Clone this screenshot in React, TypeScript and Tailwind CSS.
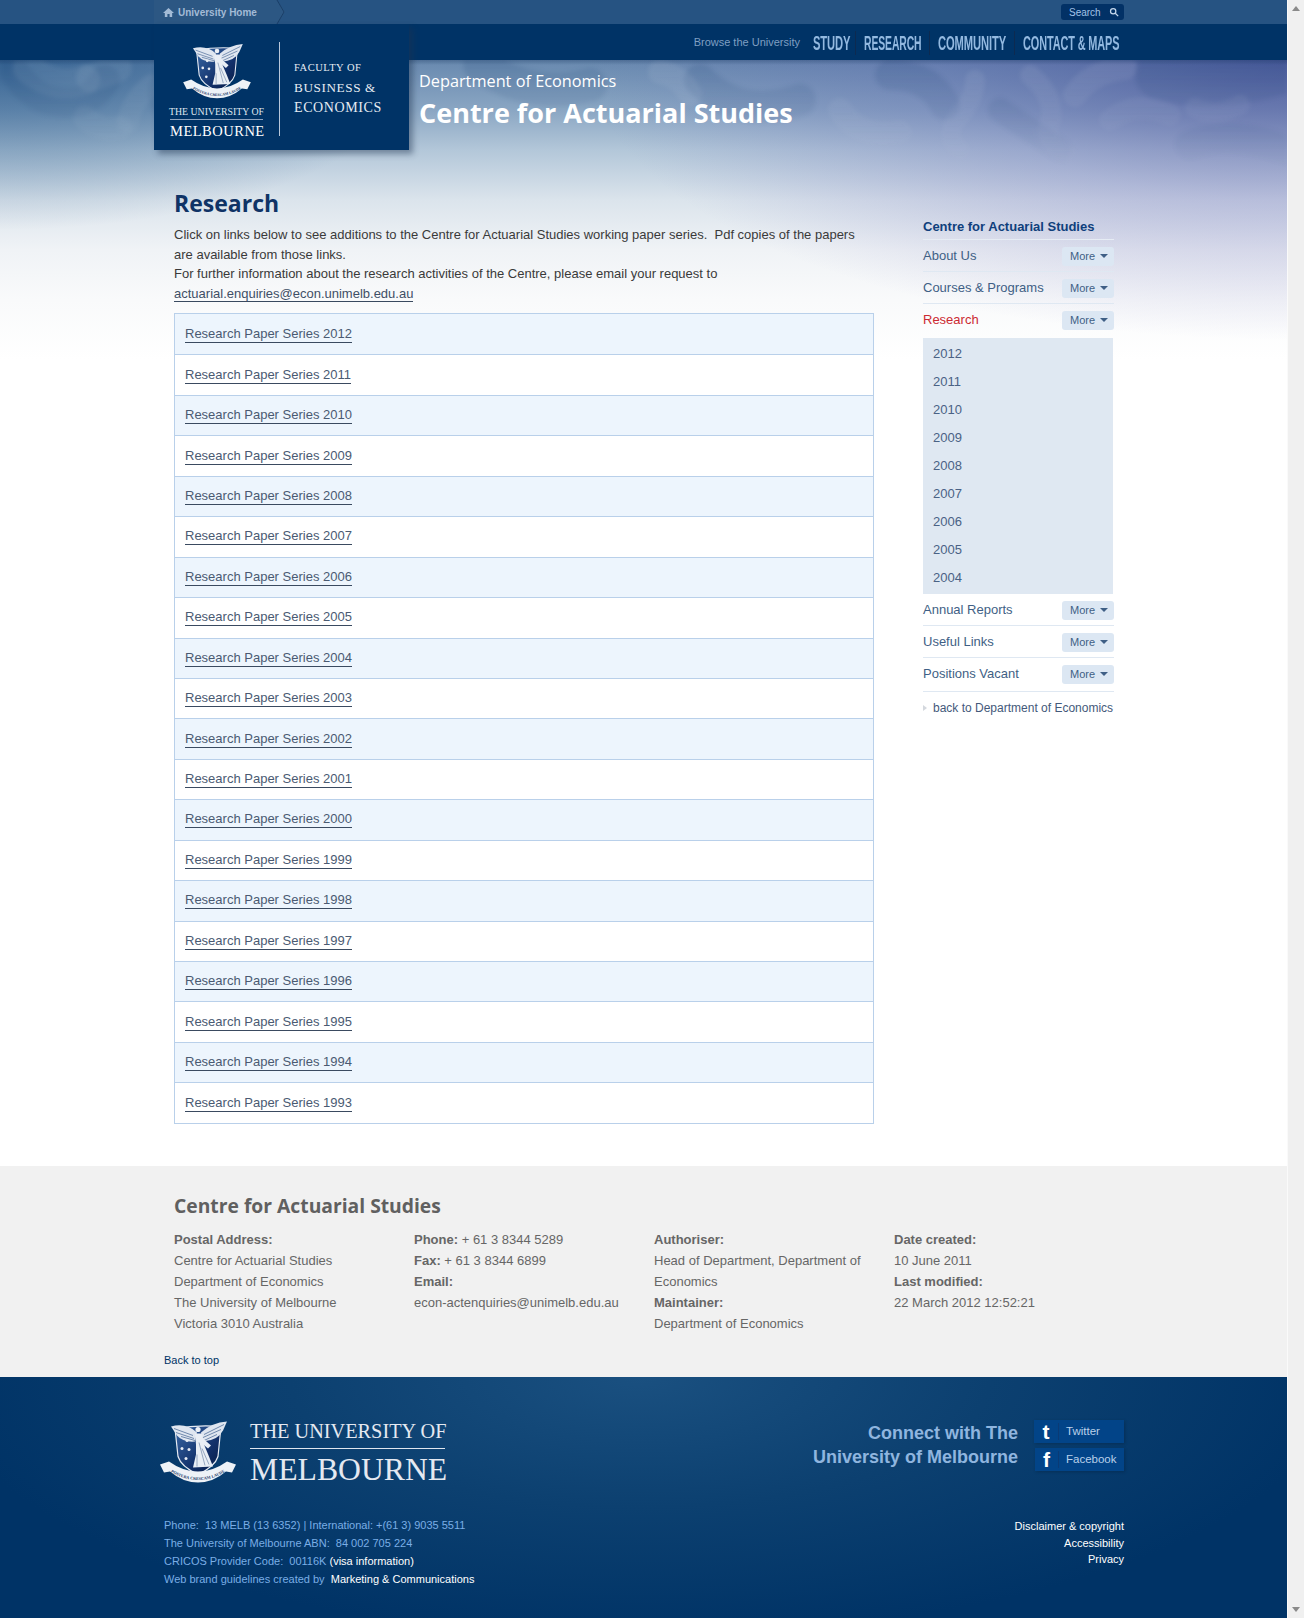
const years = [2012, 2011, 2010, 2009, 2008, 2007, 2006, 2005, 2004, 2003, 2002, 2001, 2000, 1999, 1998, 1997, 1996, 1995, 1994, 1993];
const subYears = [2012, 2011, 2010, 2009, 2008, 2007, 2006, 2005, 2004];

function Crest({ className, id }: { className: string; id: string }) {
  return (
    <svg viewBox="0 0 80 64" className={className}>
      <defs>
        <linearGradient id={`${id}-shield`} x1="0" y1="0" x2="1" y2="1">
          <stop offset="0" stopColor="#3a6aa8" />
          <stop offset="0.6" stopColor="#12306a" />
          <stop offset="1" stopColor="#06183f" />
        </linearGradient>
        <path id={`${id}-ribbon`} d="M5 46 Q22 59.5 40 59.5 Q58 59.5 75 46" fill="none" />
      </defs>
      <path d="M17 8 Q40 4 63 6 L60 36 Q57 46 40 54 Q23 46 20 36 Z" fill={`url(#${id}-shield)`} stroke="#e6ebf3" strokeWidth="1.2" />
      <path d="M13 6 Q28 2 39 12 L37 21 Q25 22 19 15 Z" fill="#dfe6f0" />
      <path d="M69 1 Q54 2 43 12 L45 21 Q60 20 65 10 Z" fill="#dfe6f0" />
      <path d="M16 8 L35 15 M18 12 L36 18 M23 16 L37 20 M66 4 L46 14 M63 9 L45 17 M59 14 L46 20" stroke="#52709b" strokeWidth="0.8" />
      <circle cx="40" cy="9" r="2.6" fill="#eef2f7" />
      <path d="M37 13 L44 13 L46 24 L51 36 L55 46 L35 47 L38 34 L38 24 Z" fill="#e9eef5" />
      <path d="M41 22 L47 45 M39 34 L39 46 M44 28 L51 44" stroke="#8094b3" strokeWidth="0.8" />
      <path d="M44 17 L53 25 L50 28 L43 22 Z" fill="#e9eef5" />
      <g fill="#e8edf5">
        <circle cx="29" cy="20" r="1.5" />
        <circle cx="24" cy="28" r="1.5" />
        <circle cx="31" cy="29" r="1.5" />
        <circle cx="28" cy="38" r="1.5" />
      </g>
      <path d="M2 44 L11 41 Q25 51 40 51 Q55 51 69 41 L78 44 L74 52 L68 51 Q55 62 40 62 Q25 62 12 51 L6 52 Z" fill="#eef2f7" />
      <text fontFamily="'Liberation Serif', serif" fontSize="4.2" fontWeight="700" fill="#1c3a68">
        <textPath href={`#${id}-ribbon`} startOffset="50%" textAnchor="middle">POSTERA CRESCAM LAUDE</textPath>
      </text>
    </svg>
  );
}

function HeroBlobs() {
  return (
    <svg viewBox="0 0 1287 130" className="absolute inset-0 h-[130px] w-[1287px] blur-[2px]" fill="none" strokeLinecap="round">
      <defs>
        <linearGradient id="fadeLight" gradientUnits="userSpaceOnUse" x1="0" y1="0" x2="0" y2="125">
          <stop offset="0" stopColor="#ffffff" stopOpacity="0.08" />
          <stop offset="1" stopColor="#ffffff" stopOpacity="0" />
        </linearGradient>
        <linearGradient id="fadeDark" gradientUnits="userSpaceOnUse" x1="0" y1="0" x2="0" y2="115">
          <stop offset="0" stopColor="#0d3468" stopOpacity="0.13" />
          <stop offset="1" stopColor="#0d3468" stopOpacity="0" />
        </linearGradient>
      </defs>
      <g stroke="url(#fadeDark)">
        <path d="M10 5 Q30 40 60 42 Q90 46 105 20" strokeWidth="30" />
        <path d="M170 10 Q150 40 175 55" strokeWidth="26" />
        <path d="M480 5 Q530 40 590 25" strokeWidth="34" />
        <path d="M700 20 Q740 60 800 40" strokeWidth="32" />
        <path d="M890 15 Q930 15 945 45" strokeWidth="30" />
        <path d="M1000 50 Q1030 70 1060 90" strokeWidth="24" />
        <path d="M1160 15 Q1210 30 1280 10" strokeWidth="50" />
        <path d="M1190 85 Q1230 70 1287 90" strokeWidth="30" />
      </g>
      <g stroke="url(#fadeLight)">
        <path d="M28 8 Q55 30 85 20" strokeWidth="30" />
        <path d="M90 18 Q105 14 118 8" strokeWidth="28" />
        <path d="M85 58 Q100 72 120 68" strokeWidth="24" />
        <path d="M128 62 Q132 40 152 25" strokeWidth="22" />
        <path d="M660 12 Q680 16 690 34" strokeWidth="24" />
        <path d="M840 50 Q860 80 900 72" strokeWidth="24" />
        <path d="M975 20 Q975 40 955 62 Q945 78 960 90" strokeWidth="20" />
        <path d="M1030 15 Q1060 40 1048 70 Q1050 88 1065 92" strokeWidth="20" />
        <path d="M1075 35 Q1090 12 1125 8" strokeWidth="24" />
        <path d="M1110 60 Q1135 40 1170 55" strokeWidth="22" />
        <path d="M1195 48 Q1215 58 1240 45" strokeWidth="20" />
      </g>
    </svg>
  );
}

function NavLink({ label, width, scale, last }: { label: string; width: string; scale: string; last?: boolean }) {
  return (
    <span className={`flex h-[24px] items-center px-[8px] ${last ? "" : "border-r border-[#0d2a50]"}`}>
      <span className={`block ${width}`}>
        <span className={`block origin-left ${scale} text-[20px] leading-none font-bold tracking-[-0.2px] whitespace-nowrap text-[#93b9e0]`}>{label}</span>
      </span>
    </span>
  );
}

function SideRow({ label, active, tall, noLine }: { label: string; active?: boolean; tall?: boolean; noLine?: boolean }) {
  return (
    <div className={`${tall ? "h-[34px]" : "h-[32px]"} ${noLine ? "" : "border-b border-[#dfe8f2]"}`}>
      <div className="flex h-[32px] items-center justify-between">
        <span className={`text-[13px] ${active ? "text-[#cc2a32]" : "text-[#3f5f85]"}`}>{label}</span>
        <span className="flex h-[19px] w-[52px] items-center gap-[5px] rounded-[3px] bg-[#dce7f3] pl-[8px] text-[11px] text-[#3f5f85]">
          More
          <span className="h-0 w-0 border-x-[4px] border-t-[4px] border-x-transparent border-t-[#3f5f85]" />
        </span>
      </div>
    </div>
  );
}

function Social({ label, icon, width }: { label: string; icon: string; width: string }) {
  return (
    <div className={`flex h-[23px] ${width} items-center self-end bg-[#024488] shadow-[1px_1px_3px_rgba(0,0,0,0.2)]`}>
      <span className="flex h-[17px] flex-1 items-center justify-center border-r border-[#0a3a75] text-[21px] leading-none font-bold text-white">{icon}</span>
      <span className="w-[65px] pl-[7px] text-[11.5px] text-[#b9d0ea]">{label}</span>
    </div>
  );
}

export default function App() {
  return (
    <div className="flex h-[1618px] w-full overflow-hidden bg-white font-['Liberation_Sans',Arial,sans-serif]">
      <div className="relative min-w-0 flex-1">
        {/* top bar */}
        <div className="flex h-[24px] items-center justify-between bg-[#265382] pr-[163px] pl-[154px]">
          <div className="relative h-[24px] w-[131px]">
            <div className="flex h-[24px] items-center gap-[4px] bg-[#2c5783] pl-[9px] text-[10px] font-bold text-[#a3bbd6] [clip-path:polygon(0_0,94%_0,100%_50%,94%_100%,0_100%)]">
              <svg viewBox="0 0 12 12" className="h-[11px] w-[11px]" fill="#a3bbd6"><path d="M6 1 L12 6.5 L10 6.5 L10 11 L7.2 11 L7.2 7.5 L4.8 7.5 L4.8 11 L2 11 L2 6.5 L0 6.5 Z" /></svg>
              University Home
            </div>
            <svg viewBox="0 0 10 24" className="absolute top-0 right-0 h-[24px] w-[10px]" fill="none" stroke="#1b3f68"><path d="M2 0 L9 12 L2 24" /></svg>
          </div>
          <div className="flex h-[16px] w-[63px] items-center justify-between rounded-[3px] bg-[#023166] pr-[5px] pl-[8px] text-[10px] text-[#a3c3e6]">
            Search
            <svg viewBox="0 0 12 12" className="h-[10px] w-[10px]" fill="none" stroke="#c6d8ec" strokeWidth="1.5"><circle cx="5" cy="5" r="3.2" /><path d="M7.5 7.5 L11 11" /></svg>
          </div>
        </div>

        {/* main nav */}
        <div className="relative z-10 flex h-[36px] items-center justify-end bg-[#003366] pt-[1px] pr-[160px]">
          <span className="mr-[5px] text-[11px] text-[#7f9fc2]">Browse the University</span>
          <NavLink label="STUDY" width="w-[34px]" scale="scale-x-[0.56]" />
          <NavLink label="RESEARCH" width="w-[57px]" scale="scale-x-[0.52]" />
          <NavLink label="COMMUNITY" width="w-[68px]" scale="scale-x-[0.56]" />
          <NavLink label="CONTACT & MAPS" width="w-[96px]" scale="scale-x-[0.545]" last />
        </div>

        {/* hero + body share the fading background */}
        <div className="relative h-[1106px] bg-[linear-gradient(180deg,#6889af_0px,#8aa6c3_50px,#b3c7d9_90px,#dbe4ec_140px,#f0f3f6_190px,#f9fafb_240px,#ffffff_300px)]">
          <div className="absolute inset-x-0 top-0 h-[300px] bg-[radial-gradient(ellipse_700px_280px_at_100%_0%,rgba(50,50,140,0.5)_0%,rgba(90,90,175,0.28)_50%,rgba(255,255,255,0)_100%)]" />
          <div className="absolute inset-x-0 top-0 h-[200px] bg-[radial-gradient(ellipse_420px_170px_at_0%_0%,rgba(15,70,125,0.55)_0%,rgba(15,70,125,0.25)_55%,rgba(15,70,125,0)_100%)]" />
          <div className="absolute inset-x-0 top-0 h-[130px] overflow-hidden">
            <HeroBlobs />
          </div>
          <div className="absolute inset-x-0 top-0 h-[5px] bg-[linear-gradient(180deg,rgba(0,30,70,0.25),rgba(0,30,70,0))]" />

          {/* logo panel, overlaps the nav */}
          <div className="absolute top-[-36px] left-[154px] z-20 flex h-[126px] w-[255px] bg-[#003366] shadow-[4px_4px_6px_rgba(30,50,80,0.45)]">
            <div className="flex w-[125px] flex-col items-center pt-[19px]">
              <Crest id="top" className="h-[57px] w-[72px]" />
              <span className="mt-[6px] font-['Liberation_Serif'] text-[9.8px] leading-[12px] whitespace-nowrap text-[#dfe6ef]">THE UNIVERSITY OF</span>
              <span className="mt-[1px] w-[93px] border-t border-[#8ea4c0] text-center font-['Liberation_Serif'] text-[14.5px] leading-[23px] tracking-[0.5px] text-white">MELBOURNE</span>
            </div>
            <div className="mt-[18px] h-[94px] w-px bg-[#b8c7da]" />
            <div className="flex flex-col pt-[34px] pl-[14px] font-['Liberation_Serif'] leading-[20px] whitespace-nowrap text-[#e6ecf3]">
              <span className="text-[10.5px] tracking-[0.5px]">FACULTY OF</span>
              <span className="text-[13.2px] tracking-[0.6px]">BUSINESS &amp;</span>
              <span className="text-[14px] tracking-[0.6px]">ECONOMICS</span>
            </div>
          </div>

          <div className="relative z-10 h-[110px] pt-[9px] pl-[419px] font-['Open_Sans'] text-white">
            <div className="text-[16.3px] leading-[24px]">Department of Economics</div>
            <div className="mt-[1px] text-[27px] leading-[38px] font-bold">Centre for Actuarial Studies</div>
          </div>

          <div className="relative z-10 flex pl-[174px]">
            <div className="w-[700px]">
              <h1 className="mt-[17px] font-['Open_Sans'] text-[23px] leading-[32px] font-bold text-[#0f3366]">Research</h1>
              <p className="mt-[6px] text-[13px] leading-[19.5px] text-[#3a3a3a]">
                Click on links below to see additions to the Centre for Actuarial Studies working paper series.&nbsp; Pdf copies of the papers are available from those links.
                <br />
                For further information about the research activities of the Centre, please email your request to
                <br />
                <a className="border-b border-[#3a4a60] text-[#3f4f66]">actuarial.enquiries@econ.unimelb.edu.au</a>
              </p>
              <div className="mt-[10px] border border-[#b9d0ea]">
                {years.map((y, i) => (
                  <div key={y} className={`flex h-[40.45px] items-center pl-[10px] ${i > 0 ? "border-t border-[#b9d0ea]" : ""} ${i % 2 === 0 ? "bg-[#edf5fd]" : "bg-white"}`}>
                    <a className="border-b border-[#3a4a60] text-[13px] leading-[16px] text-[#4a5a72]">Research Paper Series {y}</a>
                  </div>
                ))}
              </div>
            </div>

            {/* sidebar */}
            <div className="mt-[41px] ml-[49px] w-[191px]">
              <div className="flex h-[29px] items-center border-b border-[#e6ecf4] pt-[3px] text-[13px] font-bold text-[#0f3f7c]">Centre for Actuarial Studies</div>
              <SideRow label="About Us" />
              <SideRow label="Courses &amp; Programs" />
              <SideRow label="Research" active tall noLine />
              <div className="mr-px flex flex-col bg-[#dfe8f2] py-[2px] pl-[10px] text-[13px] text-[#4a6285]">
                {subYears.map((y) => (
                  <span key={y} className="flex h-[28px] items-center">{y}</span>
                ))}
              </div>
              <SideRow label="Annual Reports" />
              <SideRow label="Useful Links" />
              <SideRow label="Positions Vacant" tall />
              <div className="flex h-[31px] items-center gap-[6px] text-[12px] text-[#44597a]">
                <span className="h-0 w-0 border-y-[3.5px] border-l-[4px] border-y-transparent border-l-[#d4d8de]" />
                back to Department of Economics
              </div>
            </div>
          </div>
        </div>

        {/* footer contact */}
        <div className="h-[211px] bg-[#f1f1f1] text-[13px] leading-[21px] text-[#666666]">
          <h2 className="pt-[26px] pl-[174px] font-['Open_Sans'] text-[19.3px] leading-[28px] font-bold text-[#606060]">Centre for Actuarial Studies</h2>
          <div className="mt-[9px] ml-[174px] grid w-[960px] grid-cols-4">
            <div>
              <b>Postal Address:</b><br />Centre for Actuarial Studies<br />Department of Economics<br />The University of Melbourne<br />Victoria 3010 Australia
            </div>
            <div>
              <b>Phone:</b> + 61 3 8344 5289<br /><b>Fax:</b> + 61 3 8344 6899<br /><b>Email:</b><br />econ-actenquiries@unimelb.edu.au
            </div>
            <div className="pr-[30px]">
              <b>Authoriser:</b><br />Head of Department, Department of Economics<br /><b>Maintainer:</b><br />Department of Economics
            </div>
            <div>
              <b>Date created:</b><br />10 June 2011<br /><b>Last modified:</b><br />22 March 2012 12:52:21
            </div>
          </div>
          <div className="mt-[19px] pl-[164px] text-[11px] leading-[14px] text-[#003366]">Back to top</div>
        </div>

        {/* university footer */}
        <div className="flex h-[241px] justify-between bg-[radial-gradient(ellipse_700px_260px_at_640px_0px,#1a5080_0%,#0c4070_50%,#003366_100%)] pr-[163px] pl-[164px]">
          <div className="flex flex-col">
            <div className="mt-[43px] -ml-[6px] flex h-[65px] items-start">
              <Crest id="foot" className="h-[65px] w-[80px]" />
              <div className="-mt-[1px] ml-[12px] w-[195px] font-['Liberation_Serif'] text-[#e4e9f1]">
                <div className="pb-[4px] text-[20.3px] leading-[25px] whitespace-nowrap">THE UNIVERSITY OF</div>
                <div className="border-t border-[#dfe5ee] text-[31.7px] leading-[42px] whitespace-nowrap">MELBOURNE</div>
              </div>
            </div>
            <div className="mt-[31px] text-[11px] leading-[18px] text-[#7aaee6]">
              <div>Phone:&nbsp; 13 MELB (13 6352) | International: +(61 3) 9035 5511</div>
              <div>The University of Melbourne ABN:&nbsp; 84 002 705 224</div>
              <div>CRICOS Provider Code:&nbsp; 00116K <span className="text-white">(visa information)</span></div>
              <div>Web brand guidelines created by&nbsp; <span className="text-white">Marketing &amp; Communications</span></div>
            </div>
          </div>
          <div className="flex flex-col items-end">
            <div className="mt-[43px] flex gap-[16px]">
              <div className="mt-px text-right text-[18px] leading-[24px] font-bold text-[#8fb5df]">
                Connect with The<br />University of Melbourne
              </div>
              <div className="flex flex-col gap-[5px]">
                <Social label="Twitter" icon="t" width="w-[90px]" />
                <Social label="Facebook" icon="f" width="w-[89px]" />
              </div>
            </div>
            <div className="mt-[47px] text-right text-[11px] leading-[16.5px] text-white">
              <div>Disclaimer &amp; copyright</div>
              <div>Accessibility</div>
              <div>Privacy</div>
            </div>
          </div>
        </div>
      </div>

      {/* browser scrollbar */}
      <div className="flex w-[17px] shrink-0 flex-col items-center justify-between border-l border-[#fafafa] bg-[#f0f0f0] py-[6px]">
        <span className="h-0 w-0 border-x-[4px] border-b-[5px] border-x-transparent border-b-[#8a8a8a]" />
        <span className="h-0 w-0 border-x-[4px] border-t-[5px] border-x-transparent border-t-[#8a8a8a]" />
      </div>
    </div>
  );
}
